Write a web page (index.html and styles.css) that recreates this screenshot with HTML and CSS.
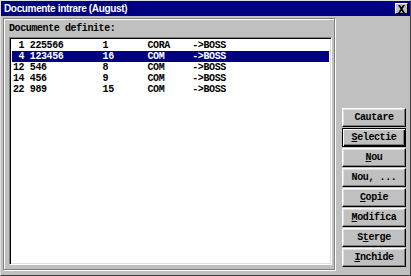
FILE: index.html
```html
<!DOCTYPE html>
<html>
<head>
<meta charset="utf-8">
<link rel="stylesheet" href="styles.css">
</head>
<body>
<div class="window">
  <div class="titlebar">
    <span class="title">Documente intrare (August)</span>
    <span class="close"><svg width="9" height="8" viewBox="0 0 9 8"><path d="M1 0h2l1.5 2.2L6 0h2L5.5 4 8 8H6L4.5 5.8 3 8H1l2.5-4z" fill="#000"/></svg></span>
  </div>
  <div class="client">
    <div class="left">
      <div class="label">Documente definite:</div>
      <div class="list">
        <div class="row"> 1 225566       1       CORA    -&gt;BOSS</div>
        <div class="row selected"> 4 123456       16      COM     -&gt;BOSS</div>
        <div class="row">12 546          8       COM     -&gt;BOSS</div>
        <div class="row">14 456          9       COM     -&gt;BOSS</div>
        <div class="row">22 989          15      COM     -&gt;BOSS</div>
      </div>
    </div>
    <div class="right">
      <div class="btn">Cautare</div>
      <div class="btn default"><u>S</u>electie</div>
      <div class="btn"><u>N</u>ou</div>
      <div class="btn">Nou, ...</div>
      <div class="btn"><u>C</u>opie</div>
      <div class="btn"><u>M</u>odifica</div>
      <div class="btn">S<u>t</u>erge</div>
      <div class="btn"><u>I</u>nchide</div>
    </div>
  </div>
</div>
</body>
</html>
```

FILE: styles.css
```css
html, body {
  margin: 0;
  padding: 0;
  background: #c0c0c0;
}
.window {
  box-sizing: border-box;
  width: 411px;
  height: 276px;
  background: #c0c0c0;
  border-top: 1px solid #dfdfdf;
  border-left: 1px solid #dfdfdf;
  border-right: 1px solid #404040;
  border-bottom: 1px solid #404040;
  display: flex;
  flex-direction: column;
}
.titlebar {
  height: 15px;
  background: #000080;
  display: flex;
  align-items: center;
  justify-content: space-between;
  padding: 0 2px 0 3px;
}
.title {
  color: #fff;
  font-family: "Liberation Sans", Arial, sans-serif;
  font-weight: bold;
  font-size: 10px;
  letter-spacing: -0.35px;
}
.close {
  box-sizing: border-box;
  width: 13px;
  height: 11px;
  background: #c0c0c0;
  border-top: 1px solid #fff;
  border-left: 1px solid #fff;
  border-right: 1px solid #000;
  border-bottom: 1px solid #000;
  display: flex;
  align-items: center;
  justify-content: center;
}
.client {
  flex: 1;
  display: flex;
  padding: 2px 1px 5px 2px;
}
.left {
  flex: 1;
  display: flex;
  flex-direction: column;
  border: 1px solid #808080;
  box-shadow: inset 1px 1px 0 #fff, 1px 1px 0 #fff;
  padding: 4px 2px 4px 5px;
}
.label, .row, .btn {
  font-family: "Liberation Mono", "Courier New", monospace;
  font-weight: bold;
  font-size: 10px;
  letter-spacing: -0.4px;
  white-space: pre;
}
.label {
  height: 14px;
  line-height: 12px;
  color: #000;
}
.list {
  flex: 1;
  background: #fff;
  border-top: 1px solid #808080;
  border-left: 1px solid #808080;
  border-right: 1px solid #fff;
  border-bottom: 1px solid #fff;
  box-shadow: inset 1px 1px 0 #000, inset -1px -1px 0 #dfdfdf;
  padding: 2px 2px 0 2px;
}
.row {
  height: 11px;
  line-height: 11px;
  padding-left: 1px;
  color: #000;
  overflow: hidden;
}
.row.selected {
  background: #000080;
  color: #fff;
}
.right {
  width: 71px;
  display: flex;
  flex-direction: column;
  align-items: flex-end;
  padding-top: 90px;
  gap: 1px;
  padding-right: 3px;
}
.btn {
  box-sizing: border-box;
  width: 64px;
  height: 19px;
  display: flex;
  align-items: center;
  justify-content: center;
  color: #000;
  background: #c0c0c0;
  border-top: 1px solid #fff;
  border-left: 1px solid #fff;
  border-right: 1px solid #000;
  border-bottom: 1px solid #000;
  box-shadow: inset -1px -1px 0 #808080, inset 1px 1px 0 #dfdfdf;
}
.btn.default {
  border: 1px solid #000;
  box-shadow: inset 1px 1px 0 #fff, inset -1px -1px 0 #000, inset -2px -2px 0 #808080;
}
.btn u {
  text-decoration: underline;
  text-underline-offset: 1px;
}
```
